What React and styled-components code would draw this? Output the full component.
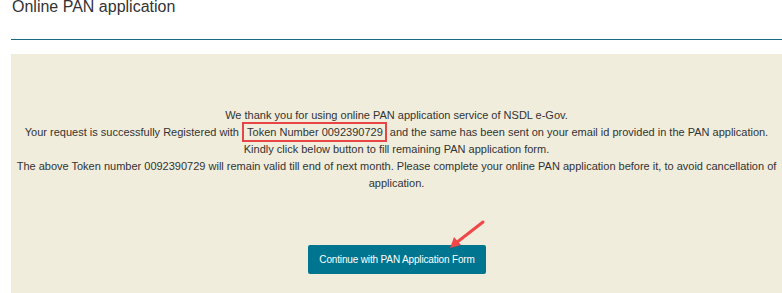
import React from "react";
import styled, { createGlobalStyle } from "styled-components";

const GlobalStyle = createGlobalStyle`
    html, body {
        margin: 0;
        padding: 0;
        background: #fff;
        overflow: hidden;
    }
    body {
        font-family: "Liberation Sans", Arial, sans-serif;
        color: #333;
    }
`

const Page = styled.div`
    padding-left: 11px;
    width: 771px;
`

const Title = styled.h2`
    margin: -2px 0 0 1px;
    font-size: 16px;
    font-weight: normal;
    line-height: 18px;
    color: #333;
`

const Divider = styled.hr`
    margin: 23px 0 14px;
    border: 0;
    border-top: 1px solid #1b6b80;
    height: 0;
`

const Panel = styled.div`
    position: relative;
    background: #f0eddc;
    padding: 53px 3px 40px;
    text-align: center;
    font-size: 11px;
    line-height: 17px;
    color: #333;
`

const Message = styled.p`
    margin: 0;
`

const TokenBox = styled.span`
    border: 2px solid #e84646;
    padding: 2px 2px 2px 3px;
`

const Actions = styled.div`
    margin-top: 53px;
    display: flex;
    justify-content: center;
`

const ContinueButton = styled.button`
    background: #00758f;
    color: #fff;
    border: none;
    border-radius: 2px;
    height: 29px;
    padding: 0 11px;
    font-family: "Liberation Sans", Arial, sans-serif;
    font-size: 10px;
    letter-spacing: -0.15px;
    margin-left: 1px;
`

const Arrow = styled.svg`
    position: absolute;
    left: 437px;
    top: 164px;
    overflow: visible;
`

const App = () => {
    return (
        <>
            <GlobalStyle />
            <Page>
                <Title>Online PAN application</Title>
                <Divider />
                <Panel>
                    <Message>
                        We thank you for using online PAN application service of NSDL e-Gov.<br />
                        Your request is successfully Registered with <TokenBox>Token Number 0092390729</TokenBox> and the same has been sent on your email id provided in the PAN application.<br />
                        Kindly click below button to fill remaining PAN application form.<br />
                        The above Token number 0092390729 will remain valid till end of next month. Please complete your online PAN application before it, to avoid cancellation of application.
                    </Message>
                    <Actions>
                        <ContinueButton>Continue with PAN Application Form</ContinueButton>
                    </Actions>
                    <Arrow width="40" height="32" viewBox="0 0 40 32">
                        <line x1="35" y1="4" x2="8" y2="25" stroke="#f04848" strokeWidth="3" strokeLinecap="round" />
                        <polygon points="2,30 6,19 13,27" fill="#f04848" />
                    </Arrow>
                </Panel>
            </Page>
        </>
    )
}

export default App;
